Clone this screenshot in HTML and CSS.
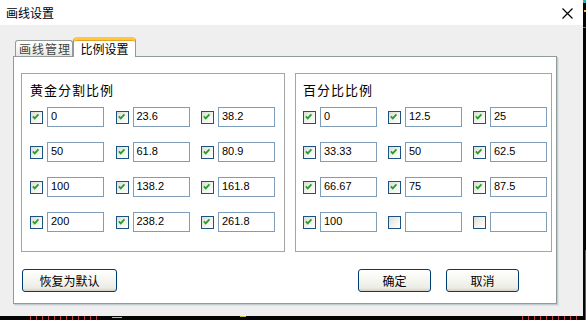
FILE: index.html
```html
<!DOCTYPE html>
<html lang="zh-CN">
<head>
<meta charset="utf-8">
<title>画线设置</title>
<link rel="stylesheet" href="styles.css">
</head>
<body>
<div class="screen">
  <div class="win">
    <div class="titlebar">
      <span class="title">画线设置</span>
      <svg class="close" width="11" height="11" viewBox="0 0 11 11"><path d="M0.5 0.5 L10.5 10.5 M10.5 0.5 L0.5 10.5" stroke="#000" stroke-width="1.2" fill="none"/></svg>
    </div>
    <div class="body">
      <div class="tabs">
        <div class="tab">画线管理</div>
        <div class="tab active">比例设置</div>
      </div>
      <div class="panel">
        <div class="groups">
          <section class="group group-left">
            <div class="glabel">黄金分割比例</div>
            <div class="grid">
              <label class="cell"><span class="cb on"><svg viewBox="0 0 13 13"><path d="M3.2 6.2 L5.4 8.6 L9.8 3.8" /></svg></span><span class="inp">0</span></label>
              <label class="cell"><span class="cb on"><svg viewBox="0 0 13 13"><path d="M3.2 6.2 L5.4 8.6 L9.8 3.8" /></svg></span><span class="inp">23.6</span></label>
              <label class="cell"><span class="cb on"><svg viewBox="0 0 13 13"><path d="M3.2 6.2 L5.4 8.6 L9.8 3.8" /></svg></span><span class="inp">38.2</span></label>
              <label class="cell"><span class="cb on"><svg viewBox="0 0 13 13"><path d="M3.2 6.2 L5.4 8.6 L9.8 3.8" /></svg></span><span class="inp">50</span></label>
              <label class="cell"><span class="cb on"><svg viewBox="0 0 13 13"><path d="M3.2 6.2 L5.4 8.6 L9.8 3.8" /></svg></span><span class="inp">61.8</span></label>
              <label class="cell"><span class="cb on"><svg viewBox="0 0 13 13"><path d="M3.2 6.2 L5.4 8.6 L9.8 3.8" /></svg></span><span class="inp">80.9</span></label>
              <label class="cell"><span class="cb on"><svg viewBox="0 0 13 13"><path d="M3.2 6.2 L5.4 8.6 L9.8 3.8" /></svg></span><span class="inp">100</span></label>
              <label class="cell"><span class="cb on"><svg viewBox="0 0 13 13"><path d="M3.2 6.2 L5.4 8.6 L9.8 3.8" /></svg></span><span class="inp">138.2</span></label>
              <label class="cell"><span class="cb on"><svg viewBox="0 0 13 13"><path d="M3.2 6.2 L5.4 8.6 L9.8 3.8" /></svg></span><span class="inp">161.8</span></label>
              <label class="cell"><span class="cb on"><svg viewBox="0 0 13 13"><path d="M3.2 6.2 L5.4 8.6 L9.8 3.8" /></svg></span><span class="inp">200</span></label>
              <label class="cell"><span class="cb on"><svg viewBox="0 0 13 13"><path d="M3.2 6.2 L5.4 8.6 L9.8 3.8" /></svg></span><span class="inp">238.2</span></label>
              <label class="cell"><span class="cb on"><svg viewBox="0 0 13 13"><path d="M3.2 6.2 L5.4 8.6 L9.8 3.8" /></svg></span><span class="inp">261.8</span></label>
            </div>
          </section>
          <section class="group group-right">
            <div class="glabel">百分比比例</div>
            <div class="grid">
              <label class="cell"><span class="cb on"><svg viewBox="0 0 13 13"><path d="M3.2 6.2 L5.4 8.6 L9.8 3.8" /></svg></span><span class="inp">0</span></label>
              <label class="cell"><span class="cb on"><svg viewBox="0 0 13 13"><path d="M3.2 6.2 L5.4 8.6 L9.8 3.8" /></svg></span><span class="inp">12.5</span></label>
              <label class="cell"><span class="cb on"><svg viewBox="0 0 13 13"><path d="M3.2 6.2 L5.4 8.6 L9.8 3.8" /></svg></span><span class="inp">25</span></label>
              <label class="cell"><span class="cb on"><svg viewBox="0 0 13 13"><path d="M3.2 6.2 L5.4 8.6 L9.8 3.8" /></svg></span><span class="inp">33.33</span></label>
              <label class="cell"><span class="cb on"><svg viewBox="0 0 13 13"><path d="M3.2 6.2 L5.4 8.6 L9.8 3.8" /></svg></span><span class="inp">50</span></label>
              <label class="cell"><span class="cb on"><svg viewBox="0 0 13 13"><path d="M3.2 6.2 L5.4 8.6 L9.8 3.8" /></svg></span><span class="inp">62.5</span></label>
              <label class="cell"><span class="cb on"><svg viewBox="0 0 13 13"><path d="M3.2 6.2 L5.4 8.6 L9.8 3.8" /></svg></span><span class="inp">66.67</span></label>
              <label class="cell"><span class="cb on"><svg viewBox="0 0 13 13"><path d="M3.2 6.2 L5.4 8.6 L9.8 3.8" /></svg></span><span class="inp">75</span></label>
              <label class="cell"><span class="cb on"><svg viewBox="0 0 13 13"><path d="M3.2 6.2 L5.4 8.6 L9.8 3.8" /></svg></span><span class="inp">87.5</span></label>
              <label class="cell"><span class="cb on"><svg viewBox="0 0 13 13"><path d="M3.2 6.2 L5.4 8.6 L9.8 3.8" /></svg></span><span class="inp">100</span></label>
              <label class="cell"><span class="cb"></span><span class="inp"></span></label>
              <label class="cell"><span class="cb"></span><span class="inp"></span></label>
            </div>
          </section>
        </div>
        <div class="buttons">
          <button class="btn btn-reset">恢复为默认</button>
          <button class="btn btn-ok">确定</button>
          <button class="btn btn-cancel">取消</button>
        </div>
      </div>
    </div>
  </div>
  <div class="edge-right"></div>
  <div class="edge-bottom"></div>
</div>
</body>
</html>
```

FILE: styles.css
```css
* { box-sizing: border-box; }
html, body { margin: 0; padding: 0; }
body {
  background: #050505;
  width: 586px;
  height: 320px;
  overflow: hidden;
  font-family: "Noto Sans CJK SC", "Noto Sans", sans-serif;
}
.screen {
  display: grid;
  grid-template-columns: 583px 3px;
  grid-template-rows: 316px 4px;
}
.win {
  grid-column: 1;
  grid-row: 1;
  display: flex;
  flex-direction: column;
  background: #efefef;
}
.edge-right {
  grid-column: 2;
  grid-row: 1 / span 2;
  background:
    linear-gradient(#1fb5b5, #1fb5b5) 0 0 / 3px 3px no-repeat,
    linear-gradient(#d9d92a, #d9d92a) 1px 10px / 2px 2px no-repeat,
    linear-gradient(#c030c0, #c030c0) 0 27px / 3px 1px no-repeat,
    linear-gradient(#c83030, #c83030) 2px 250px / 1px 70px no-repeat,
    #050505;
}
.edge-bottom {
  grid-column: 1;
  grid-row: 2;
  background:
    repeating-linear-gradient(90deg, #c83a3a 0 1px, transparent 1px 6px) 30px 0 / 70px 4px no-repeat,
    repeating-linear-gradient(90deg, #c83a3a 0 1px, transparent 1px 6px) 522px 0 / 60px 4px no-repeat,
    linear-gradient(#c8c030, #c8c030) 112px 1px / 10px 1px no-repeat,
    linear-gradient(#c8c030, #c8c030) 240px 0 / 6px 1px no-repeat,
    #050505;
}

/* title bar */
.titlebar {
  height: 25px;
  background: #fff;
  display: flex;
  align-items: center;
  padding-left: 6px;
}
.title {
  font-size: 12px;
  line-height: 14px;
  color: #000;
}
.close {
  margin-left: auto;
  margin-right: 10px;
  margin-top: 1px;
}

/* body */
.body {
  flex: 1;
  padding: 12px 0 0 13px;
}
.tabs {
  display: flex;
  align-items: flex-end;
  height: 19px;
  padding-left: 2px;
}
.tab {
  height: 16px;
  width: 58px;
  border: 1px solid #919b9c;
  border-bottom: none;
  border-radius: 3px 3px 0 0;
  background: linear-gradient(#ffffff, #f3f3ef 60%, #e8e8e2);
  font-size: 12px;
  letter-spacing: 1px;
  color: #444;
  display: flex;
  align-items: center;
  justify-content: center;
  line-height: 14px;
  padding-left: 2px;
}
.tab.active {
  position: relative;
  z-index: 1;
  width: 63px;
  height: 20px;
  margin-bottom: -1px;
  background: #fff;
  color: #000;
  letter-spacing: 0;
  border-top: 3px solid #ffc83c;
  box-shadow: inset 0 1px 0 #e6a02c;
  border-radius: 4px 4px 0 0;
  padding-left: 0;
  padding-top: 0;
}
.panel {
  width: 544px;
  height: 248px;
  background: #fff;
  border: 1px solid #919b9c;
  box-shadow: 1px 1px 0 #c5cccf, 2px 2px 0 #dfe2e3;
  padding: 16px 0 0 7px;
}
.groups {
  display: flex;
  gap: 10px;
}
.group {
  height: 179px;
  border: 1px solid #a5a5a5;
  padding: 8px 0 0 8px;
}
.group-left { width: 264px; }
.group-right { width: 257px; padding-left: 7px; }
.glabel {
  height: 16px;
  line-height: 16px;
  font-size: 13px;
  letter-spacing: 1px;
  color: #000;
}
.grid {
  margin-top: 9px;
  display: grid;
  grid-template-columns: repeat(3, 74px);
  column-gap: 11.5px;
  row-gap: 15px;
}
.group-right .grid { column-gap: 11px; }
.cell {
  display: flex;
  align-items: center;
  gap: 4px;
  height: 20px;
}
.cb {
  width: 13px;
  height: 13px;
  border: 1px solid #1c5180;
  background: linear-gradient(135deg, #dcdcd7, #f4f4f1 60%, #ffffff);
  display: block;
  flex: none;
}
.cb svg {
  display: block;
  width: 11px;
  height: 11px;
  margin: 0;
}
.cb svg path {
  fill: none;
  stroke: #21a121;
  stroke-width: 2;
  transform: translate(-1px, -1px);
}
.inp {
  width: 57px;
  height: 20px;
  border: 1px solid #7f9db9;
  background: #fff;
  font-family: "Liberation Sans", Arial, sans-serif;
  font-size: 11px;
  line-height: 17px;
  padding-left: 3px;
  color: #000;
  flex: none;
}

/* buttons */
.buttons {
  display: flex;
  margin-top: 17px;
}
.btn {
  height: 23px;
  border: 1px solid #003c74;
  border-radius: 3px;
  background: linear-gradient(#ffffff, #f5f5f0 50%, #ecebe5 85%, #d6d0c5);
  font-family: "Noto Sans CJK SC", sans-serif;
  font-size: 12px;
  line-height: 14px;
  color: #000;
  padding: 0;
  margin: 0;
}
.btn-reset { width: 95px; margin-left: 1px; }
.btn-ok { width: 73px; margin-left: 241px; }
.btn-cancel { width: 73px; margin-left: 15px; }
```
